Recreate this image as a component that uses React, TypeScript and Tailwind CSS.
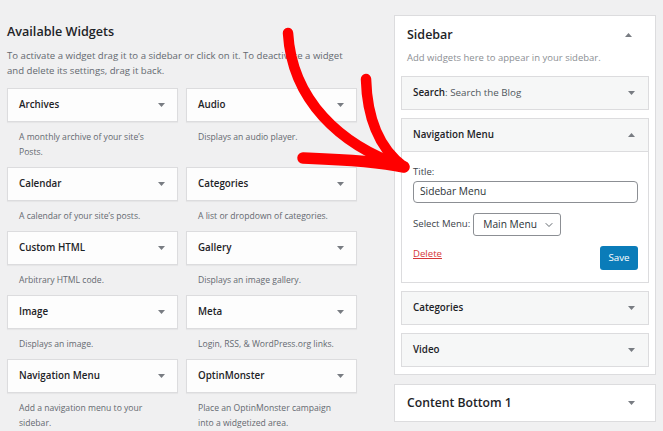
import { ChevronDown } from 'lucide-react';

type Widget = { title: string; desc: string };

const widgets: Widget[] = [
  { title: 'Archives', desc: 'A monthly archive of your site\u2019s Posts.' },
  { title: 'Audio', desc: 'Displays an audio player.' },
  { title: 'Calendar', desc: 'A calendar of your site\u2019s posts.' },
  { title: 'Categories', desc: 'A list or dropdown of categories.' },
  { title: 'Custom HTML', desc: 'Arbitrary HTML code.' },
  { title: 'Gallery', desc: 'Displays an image gallery.' },
  { title: 'Image', desc: 'Displays an image.' },
  { title: 'Meta', desc: 'Login, RSS, & WordPress.org links.' },
  { title: 'Navigation Menu', desc: 'Add a navigation menu to your sidebar.' },
  { title: 'OptinMonster', desc: 'Place an OptinMonster campaign into a widgetized area.' },
];

function Caret({ up = false }: { up?: boolean }) {
  return (
    <svg width="7" height="4" viewBox="0 0 7 4" className="shrink-0 fill-[#787c82]">
      {up ? <path d="M0 4 L3.5 0 L7 4Z" /> : <path d="M0 0 L7 0 L3.5 4Z" />}
    </svg>
  );
}

function SidebarWidget({ children }: { children: React.ReactNode }) {
  return (
    <div className="flex h-[34px] items-center justify-between border border-[#dcdcde] bg-[#f6f7f7] pl-[11px] pr-[13px]">
      <span className="text-[9.8px] text-[#1d2327]">{children}</span>
      <Caret />
    </div>
  );
}

export default function App() {
  return (
    <div className="relative flex h-[431px] w-[663px] overflow-hidden bg-[#f0f0f1] font-['Open_Sans',sans-serif]">
      {/* Available widgets */}
      <div className="w-[357px] shrink-0 pl-[7px] pt-[23px]">
        <h2 className="text-[12.6px] font-semibold leading-[18px] text-[#1d2327]">Available Widgets</h2>
        <p className="mt-[6.5px] mb-[10.5px] text-[9.6px] leading-[15px] text-[#646970]">
          To activate a widget drag it to a sidebar or click on it. To deactivate a widget and delete its settings, drag it back.
        </p>
        <div className="grid grid-cols-2 gap-x-2">
          {widgets.map((w) => (
            <div key={w.title}>
              <div className="flex h-[34px] items-center justify-between border border-[#dcdcde] bg-[#fdfdfd] pl-[11px] pr-[12px] shadow-[0_1px_1px_rgba(0,0,0,0.04)]">
                <span className="text-[9.8px] font-semibold text-[#1d2327]">{w.title}</span>
                <Caret />
              </div>
              <p className="px-3 py-[7.5px] text-[8.6px] leading-[15px] text-[#646970]">{w.desc}</p>
            </div>
          ))}
        </div>
      </div>

      {/* Sidebar area */}
      <div className="ml-[37px] w-[262px] shrink-0 pt-[15px]">
        <div className="border border-[#dcdcde] bg-white px-[6px] pb-[7px] pt-[10px]">
          <div className="flex items-center justify-between pl-[6px] pr-[17px]">
            <h2 className="text-[12.5px] font-semibold leading-[18px] text-[#1d2327]">Sidebar</h2>
            <Caret up />
          </div>
          <p className="mt-[5.5px] pl-[6px] text-[9.5px] leading-[15px] text-[#8c8f94]">
            Add widgets here to appear in your sidebar.
          </p>
          <div className="mt-[11.5px] flex flex-col gap-2">
            <SidebarWidget>
              <span className="font-semibold">Search</span>
              <span className="text-[#50575e]">: Search the Blog</span>
            </SidebarWidget>

            <div className="border border-[#dcdcde]">
              <div className="flex h-[33px] items-center justify-between border-b border-[#dcdcde] bg-[#f6f7f7] pl-[11px] pr-[13px]">
                <span className="text-[9.8px] font-semibold text-[#1d2327]">Navigation Menu</span>
                <Caret up />
              </div>
              <div className="bg-white pb-[12px] pl-[11px] pr-[10px] pt-[13px]">
                <label className="block text-[9.5px] leading-[14px] text-[#3c434a]">Title:</label>
                <div className="mt-[2px] flex h-[22px] items-center rounded-[4px] border border-[#8c8f94] px-[6px] text-[10.2px] text-[#2c3338]">
                  Sidebar Menu
                </div>
                <div className="mt-[10px] flex items-center gap-[3px]">
                  <span className="text-[9.6px] text-[#3c434a]">Select Menu:</span>
                  <div className="flex h-[23px] w-[88px] items-center justify-between rounded-[3px] border border-[#8c8f94] pl-[9px] pr-[5px] text-[10.2px] text-[#2c3338]">
                    Main Menu
                    <ChevronDown className="h-3 w-3 text-[#50575e]" strokeWidth={1.8} />
                  </div>
                </div>
                <div className="mt-[10px] flex items-start justify-between">
                  <span className="mt-[1px] text-[9.6px] leading-[14px] text-[#d63638] underline">Delete</span>
                  <button className="flex h-[24px] w-[38px] items-center justify-center rounded-[3px] bg-[#0a7cb9] text-[9.8px] text-white">
                    Save
                  </button>
                </div>
              </div>
            </div>

            <SidebarWidget>
              <span className="font-semibold">Categories</span>
            </SidebarWidget>
            <SidebarWidget>
              <span className="font-semibold">Video</span>
            </SidebarWidget>
          </div>
        </div>

        <div className="mt-[9px] flex h-[38px] items-center justify-between border border-[#dcdcde] bg-white pl-[12px] pr-[20px]">
          <span className="text-[12.2px] font-semibold text-[#1d2327]">Content Bottom 1</span>
          <Caret />
        </div>
      </div>

      {/* Hand-drawn red arrow */}
      <svg className="pointer-events-none absolute left-0 top-0" width="663" height="431" viewBox="0 0 663 431">
        <g fill="none" stroke="#ff0000" strokeLinecap="round" strokeLinejoin="round">
          <path d="M288 33 C292 100, 340 145, 402 166" strokeWidth="10.5" />
          <path d="M303 158 C330 159, 370 160, 404 167" strokeWidth="11.5" />
          <path d="M366 79 C367 115, 378 148, 404 167" strokeWidth="10.5" />
        </g>
      </svg>
    </div>
  );
}
